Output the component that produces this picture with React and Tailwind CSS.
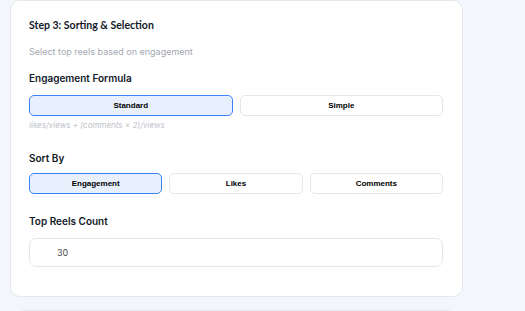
import React, { useState } from "react";

const FORMULAS = {
  standard: "likes/views + (comments × 2)/views",
  simple: "(likes + comments)/views",
};

function OptionButton({ active, onClick, children }) {
  return (
    <button
      onClick={onClick}
      className={
        active
          ? "flex-1 h-[21px] rounded-[5px] border border-[#3b82f6] bg-[#e8f0fe] text-[8px] font-bold text-black font-['Liberation_Sans',Arial,sans-serif]"
          : "flex-1 h-[21px] rounded-[5px] border border-[#e5e7eb] bg-white text-[8px] font-bold text-black font-['Liberation_Sans',Arial,sans-serif]"
      }
    >
      {children}
    </button>
  );
}

export default function App() {
  const [formula, setFormula] = useState("standard");
  const [sortBy, setSortBy] = useState("engagement");
  const [count, setCount] = useState(30);

  return (
    <div className="w-[525px] h-[311px] overflow-hidden bg-[#f4f6fd] font-['Inter',sans-serif]">
      <div className="ml-[10px] w-[453px] rounded-[10px] border border-[#e5e7eb] bg-white pt-[16px] pl-[18px] pr-[19px] pb-[29px]">
        <h3 className="text-[10.5px] leading-[16px] font-bold text-[#111827] font-['Lato',sans-serif]">
          Step 3: Sorting &amp; Selection
        </h3>
        <p className="mt-[13px] text-[9px] leading-[12px] text-[#a3a8b2]">
          Select top reels based on engagement
        </p>

        <div className="mt-[13px] text-[10px] leading-[14px] font-semibold text-[#111827]">
          Engagement Formula
        </div>
        <div className="mt-[10px] flex gap-[7px]">
          <OptionButton active={formula === "standard"} onClick={() => setFormula("standard")}>
            Standard
          </OptionButton>
          <OptionButton active={formula === "simple"} onClick={() => setFormula("simple")}>
            Simple
          </OptionButton>
        </div>
        <p className="mt-[3px] text-[8px] leading-[12px] italic text-[#c0c4cc]">
          {FORMULAS[formula]}
        </p>

        <div className="mt-[20px] text-[10px] leading-[14px] font-semibold text-[#111827]">
          Sort By
        </div>
        <div className="mt-[8px] flex gap-[7px]">
          <OptionButton active={sortBy === "engagement"} onClick={() => setSortBy("engagement")}>
            Engagement
          </OptionButton>
          <OptionButton active={sortBy === "likes"} onClick={() => setSortBy("likes")}>
            Likes
          </OptionButton>
          <OptionButton active={sortBy === "comments"} onClick={() => setSortBy("comments")}>
            Comments
          </OptionButton>
        </div>

        <div className="mt-[20px] text-[10px] leading-[14px] font-semibold text-[#111827]">
          Top Reels Count
        </div>
        <input
          type="number"
          value={count}
          onChange={(e) => setCount(e.target.value)}
          className="mt-[10px] block w-full h-[29px] rounded-[7px] border border-[#e5e7eb] bg-white pl-[27px] text-[9px] text-[#4b4b4b] outline-none [appearance:textfield]"
        />
      </div>

      <div className="mt-[13px] ml-[16px] w-[440px] h-[10px] rounded-t-[10px] border-t border-[#e5e7eb] bg-white" />
    </div>
  );
}
